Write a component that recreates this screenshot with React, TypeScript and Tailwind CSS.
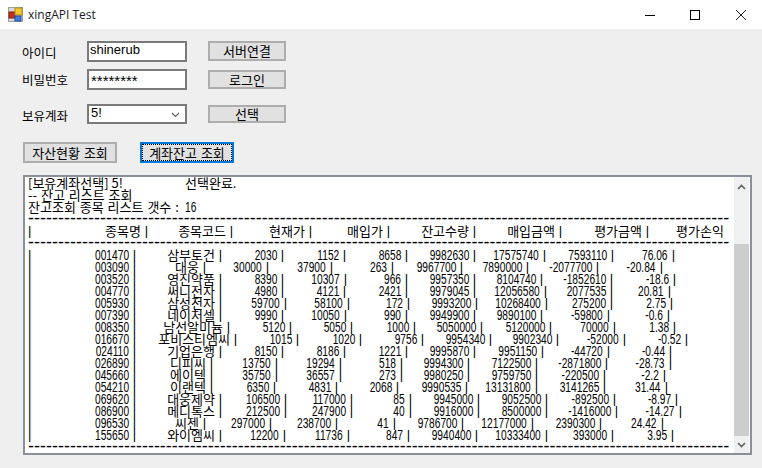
const ROW_FONT = "font-['Liberation_Sans','Noto_Sans_CJK_KR',sans-serif]";
const KR_FONT = "font-['Noto_Sans_CJK_KR',sans-serif]";

const ORIGIN = 30;

const HEADER = ["종목명", "종목코드", "현재가", "매입가", "잔고수량", "매입금액", "평가금액"];
const HEADER_PIPES = [147.7, 233.3, 311.7, 390, 476, 561.7, 649.3];

const ROWS: { cells: string[]; pipes: number[] }[] = [
  { cells: ["001470", "삼부토건", "2030", "1152", "8658", "9982630", "17575740", "7593110", "76.06"], pipes: [135.7, 221.7, 283.7, 345.7, 407.7, 476, 546, 614, 675] },
  { cells: ["003090", "대웅", "30000", "37900", "263", "9967700", "7890000", "-2077700", "-20.84"], pipes: [135.7, 205.7, 269.3, 333.3, 393.7, 462.7, 529.3, 599.3, 663.3] },
  { cells: ["003520", "영진약품", "8390", "10307", "966", "9957350", "8104740", "-1852610", "-18.6"], pipes: [135.7, 221.7, 283.7, 346.7, 407.7, 476, 543.3, 613.3, 676] },
  { cells: ["004770", "써니전자", "4980", "4121", "2421", "9979045", "12056580", "2077535", "20.81"], pipes: [135.7, 221.7, 283.7, 345.7, 407.7, 476, 546.7, 613.3, 671] },
  { cells: ["005930", "삼성전자", "59700", "58100", "172", "9993200", "10268400", "275200", "2.75"], pipes: [135.7, 221.7, 286.7, 350, 410, 477.7, 547.7, 613.3, 673.3] },
  { cells: ["007390", "네이처셀", "9990", "10050", "990", "9949900", "9890100", "-59800", "-0.6"], pipes: [135.7, 221.7, 283.7, 346.7, 407.7, 476, 543.3, 610, 669.7] },
  { cells: ["008350", "남선알미늄", "5120", "5050", "1000", "5050000", "5120000", "70000", "1.38"], pipes: [135.7, 230, 291.7, 353, 416, 483.3, 552, 616, 676] },
  { cells: ["016670", "포비스티엠씨", "1015", "1020", "9756", "9954340", "9902340", "-52000", "-0.52"], pipes: [135.7, 237.3, 299.3, 361.7, 423.7, 491.7, 559.3, 626, 688.3] },
  { cells: ["024110", "기업은행", "8150", "8186", "1221", "9995870", "9951150", "-44720", "-0.44"], pipes: [135.7, 221.7, 283.7, 345.7, 408.3, 476, 544.3, 610.3, 672] },
  { cells: ["026890", "디피씨", "13750", "19294", "518", "9994300", "7122500", "-2871800", "-28.73"], pipes: [135.7, 213.3, 278.3, 341.7, 402.7, 470.3, 537.7, 608.3, 672] },
  { cells: ["045660", "에이텍", "35750", "36557", "273", "9980250", "9759750", "-220500", "-2.2"], pipes: [135.7, 213.3, 278.3, 341.7, 402.7, 470.3, 537.7, 606, 666] },
  { cells: ["054210", "이랜텍", "6350", "4831", "2068", "9990535", "13131800", "3141265", "31.44"], pipes: [135.7, 213.3, 276, 337.7, 399.3, 468.3, 537.7, 606, 668.3] },
  { cells: ["069620", "대웅제약", "106500", "117000", "85", "9945000", "9052500", "-892500", "-8.97"], pipes: [135.7, 221.7, 287.3, 353.3, 411.7, 480, 547.7, 616, 678.3] },
  { cells: ["086900", "메디톡스", "212500", "247900", "40", "9916000", "8500000", "-1416000", "-14.27"], pipes: [135.7, 221.7, 287.3, 353.3, 411.7, 480, 547.7, 618.3, 681.7] },
  { cells: ["096530", "씨젠", "297000", "238700", "41", "9786700", "12177000", "2390300", "24.42"], pipes: [135.7, 205.7, 271.7, 337.7, 396, 464.3, 534.3, 602, 663.7] },
  { cells: ["155650", "와이엠씨", "12200", "11736", "847", "9940400", "10333400", "393000", "3.95"], pipes: [135.7, 221.7, 286, 350, 410, 477.7, 547.7, 614.3, 674.3] },
];

function Digits({ children }: { children: string }) {
  return <span className="inline-block origin-right scale-x-[0.68] text-[15px] leading-[12px]">{children}</span>;
}

function Kr({ children }: { children: string }) {
  return <span className={`${KR_FONT} text-[13px] leading-[12px]`}>{children}</span>;
}

function Pipe() {
  return <span className="-ml-[0.3px] inline-block w-[3.3px] shrink-0 text-[13px] leading-[12px]">|</span>;
}

function Cell({ width, children }: { width: number; children: React.ReactNode }) {
  return (
    <div className="flex h-[12px] shrink-0 items-center justify-end gap-[4px] whitespace-nowrap" style={{ width }}>
      {children}
      <Pipe />
    </div>
  );
}

// pipes sit on whole pixels, like the bitmap font of the original
function cellWidth(pipes: number[], i: number) {
  return Math.round(pipes[i]) - (i === 0 ? ORIGIN : Math.round(pipes[i - 1]));
}

function TableRow({ cells, pipes }: { cells: string[]; pipes: number[] }) {
  return (
    <div className="flex h-[12px] items-center">
      <span className="w-[2px] shrink-0 text-[13px] leading-[12px]">|</span>
      {cells.map((text, i) => (
        <Cell key={i} width={cellWidth(pipes, i)}>
          {i === 1 ? <Kr>{text}</Kr> : <Digits>{text}</Digits>}
        </Cell>
      ))}
    </div>
  );
}

function HeaderRow() {
  return (
    <div className="flex h-[12px] items-center">
      <span className="w-[2px] shrink-0 text-[13px] leading-[12px]">|</span>
      {HEADER.map((text, i) => (
        <Cell key={text} width={cellWidth(HEADER_PIPES, i)}>
          <Kr>{text}</Kr>
        </Cell>
      ))}
      <span className={`${KR_FONT} ml-[27px] text-[13px] leading-[12px]`}>평가손익</span>
    </div>
  );
}

function Dashes() {
  return (
    <div className="-mt-px mb-px h-[12px] whitespace-nowrap font-['Liberation_Sans'] text-[18px] leading-[12px]">
      {"-".repeat(117)}
    </div>
  );
}

function FormButton({ label, className }: { label: string; className: string }) {
  return (
    <div className={`flex items-center justify-center border-2 border-[#adadad] bg-[#e1e1e1] text-[13px] leading-[14px] [word-spacing:1px] ${className}`}>
      {label}
    </div>
  );
}

function WindowIcon() {
  return (
    <svg width="15" height="15" viewBox="0 0 15 15" className="ml-[8px]">
      <rect x="0.5" y="0.5" width="14" height="14" fill="#d8d8d8" stroke="#a0a0a0" />
      <rect x="1" y="5" width="6" height="6" fill="#c03020" stroke="#802010" />
      <rect x="7" y="1" width="7" height="7" fill="#f8c830" stroke="#b88810" />
      <rect x="7" y="9" width="6" height="5" fill="#4080e0" stroke="#2050a0" />
    </svg>
  );
}

function WindowControls() {
  return (
    <div className="ml-auto flex items-center">
      <svg width="12" height="12" viewBox="0 0 12 12" className="mr-[33px]">
        <path d="M1 6.5h10" stroke="#000" />
      </svg>
      <svg width="12" height="12" viewBox="0 0 12 12" className="mr-[34px]">
        <rect x="1.5" y="1.5" width="9" height="9" fill="none" stroke="#000" />
      </svg>
      <svg width="12" height="12" viewBox="0 0 12 12" className="mr-[15px]">
        <path d="M1 1l10 10M11 1L1 11" stroke="#000" strokeWidth="0.9" fill="none" />
      </svg>
    </div>
  );
}

export default function App() {
  return (
    <div className={`h-[468px] w-[762px] overflow-hidden bg-[#efefef] text-black ${KR_FONT}`}>
      {/* Title bar */}
      <div className="flex h-[29px] items-center bg-white">
        <WindowIcon />
        <span className="ml-[5px] font-['Open_Sans','Noto_Sans_CJK_KR',sans-serif] text-[12px] text-[#1a1a1a]">xingAPI Test</span>
        <WindowControls />
      </div>

      {/* Login fields */}
      <div className="mt-[12px] flex h-[21px] pl-[22px]">
        <label className="mt-[2px] w-[65px] text-[12.5px] leading-[20px]">아이디</label>
        <div className="h-[21px] w-[100px] border-2 border-[#7a7a7a] bg-white pl-[1px] font-['Liberation_Sans'] text-[13px] leading-[14px]">shinerub</div>
        <FormButton label="서버연결" className="ml-[21px] h-[20px] w-[78px]" />
      </div>
      <div className="mt-[7px] flex h-[21px] pl-[22px]">
        <label className="mt-[1px] w-[65px] text-[12.5px] leading-[20px]">비밀번호</label>
        <div className="h-[21px] w-[100px] border-2 border-[#7a7a7a] bg-white pl-[2px] font-['Liberation_Sans'] text-[15px] leading-[19px]">********</div>
        <FormButton label="로그인" className="ml-[21px] mt-[1px] h-[19px] w-[78px]" />
      </div>
      <div className="mt-[14px] flex h-[20px] pl-[22px]">
        <label className="mt-[2px] w-[65px] text-[12.5px] leading-[20px]">보유계좌</label>
        <div className="flex h-[20px] w-[100px] items-center border-2 border-[#7a7a7a] bg-white pl-[2px] font-['Liberation_Sans'] text-[13px] leading-[14px]">
          <span className="-mt-[3px]">5!</span>
          <svg width="9" height="6" viewBox="0 0 9 6" className="ml-auto mr-[5px] mt-[2px]">
            <path d="M1 1l3.5 3.5L8 1" fill="none" stroke="#606060" strokeWidth="1.2" />
          </svg>
        </div>
        <FormButton label="선택" className="ml-[21px] mt-[1px] h-[18px] w-[78px]" />
      </div>

      {/* Query buttons */}
      <div className="mt-[18px] flex pl-[23px]">
        <FormButton label="자산현황 조회" className="h-[21px] w-[94px]" />
        <div className="ml-[23px] h-[21px] w-[94px] border-2 border-[#0078d7] bg-[#e1e1e1]">
          <div className="flex h-full items-center justify-center border border-dotted border-black text-[13px] leading-[14px] [word-spacing:1px]">계좌잔고 조회</div>
        </div>
      </div>

      {/* Output box */}
      <div className={`relative ml-[23px] mt-[12px] h-[280px] w-[729px] border-2 border-[#8a8f98] bg-white ${ROW_FONT}`}>
        <div className="pl-[3px]">
          <div className="flex h-[12px] items-center">
            <span className={`${KR_FONT} w-[157px] text-[13px] leading-[12px]`}>[보유계좌선택] 5!</span>
            <span className={`${KR_FONT} text-[13px] leading-[12px]`}>선택완료.</span>
          </div>
          <div className={`${KR_FONT} h-[12px] text-[13px] leading-[12px] [word-spacing:1px]`}>-- 잔고 리스트 조회</div>
          <div className={`${KR_FONT} flex h-[12px] items-center text-[13px] leading-[12px] [word-spacing:1px]`}>
            <span>잔고조회 종목 리스트 갯수 :</span>
            <span className="ml-[6px] inline-block origin-left scale-x-[0.68] font-['Liberation_Sans'] text-[15px]">16</span>
          </div>
          <Dashes />
          <HeaderRow />
          <Dashes />
          {ROWS.map((row) => (
            <TableRow key={row.cells[0]} cells={row.cells} pipes={row.pipes} />
          ))}
          <Dashes />
        </div>

        {/* Scrollbar */}
        <div className="absolute bottom-0 right-[1px] top-0 flex w-[15px] flex-col items-center bg-[#f0f0f0]">
          <div className="flex h-[67px] w-full items-start justify-center pt-[7px]">
            <svg width="9" height="6" viewBox="0 0 9 6">
              <path d="M1 5l3.5-3.5L8 5" fill="none" stroke="#606060" strokeWidth="1.6" />
            </svg>
          </div>
          <div className="w-full flex-1 bg-[#cdcdcd]" />
          <div className="flex h-[17px] w-full items-center justify-center">
            <svg width="9" height="6" viewBox="0 0 9 6">
              <path d="M1 1l3.5 3.5L8 1" fill="none" stroke="#606060" strokeWidth="1.6" />
            </svg>
          </div>
        </div>
      </div>
    </div>
  );
}
